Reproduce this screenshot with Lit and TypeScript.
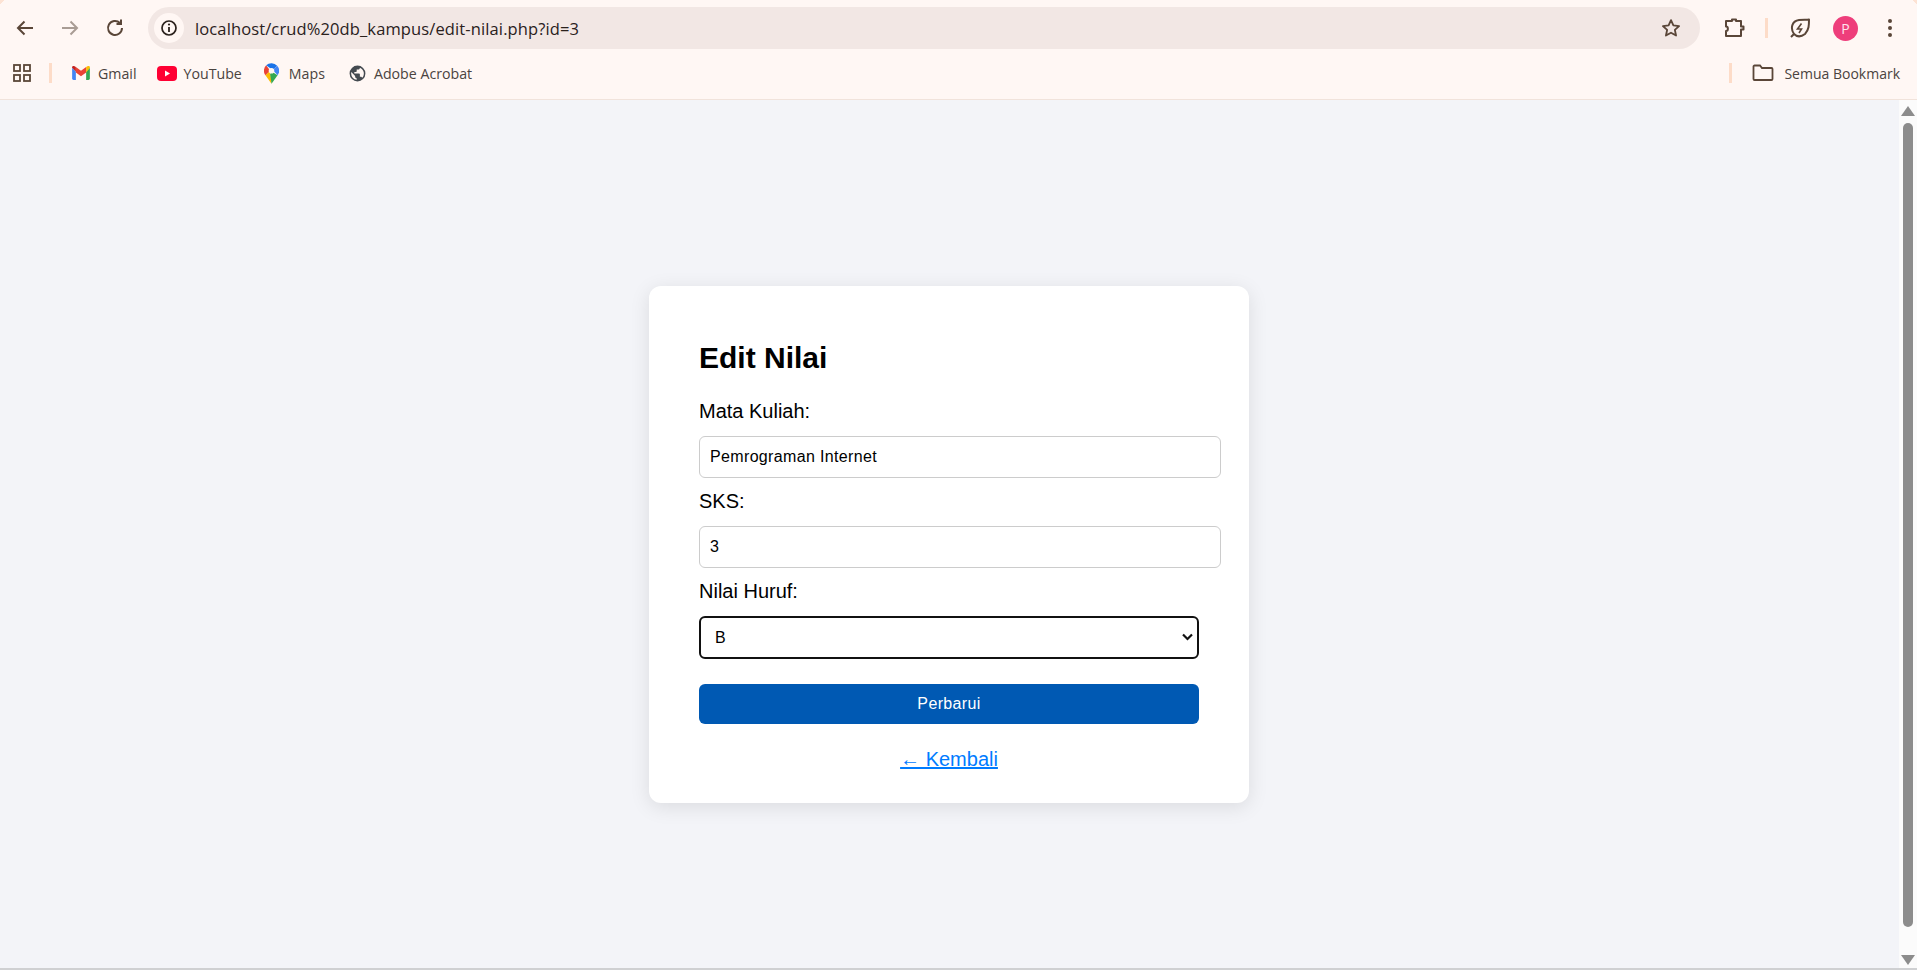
import { LitElement, html, css, svg } from "lit";
import { customElement } from "lit/decorators.js";

const stroke = "#5a4638";

@customElement("app-root")
export class AppRoot extends LitElement {
  static styles = css`
    :host { display: flex; flex-direction: column; width: 1917px; height: 970px; overflow: hidden; font-family: "Liberation Sans", Arial, sans-serif; background: #f3f4f8; }
    .chrome { flex: none; height: 100px; box-sizing: border-box; background: linear-gradient(135deg, #fde3d4 3px, transparent 3px), linear-gradient(225deg, #fde3d4 3px, transparent 3px), #fff7f4; border-bottom: 1px solid #f1e3db; display: flex; flex-direction: column; }
    .toolbar { height: 56px; flex: none; display: flex; align-items: center; box-sizing: border-box; padding-left: 13px; }
    .nav { width: 24px; height: 24px; flex: none; display: block; margin-right: 21px; }
    .omnibox { width: 1552px; height: 42px; flex: none; border-radius: 21px; background: #f2e7e4; display: flex; align-items: center; box-sizing: border-box; padding: 0 18px 0 6px; }
    .info { width: 30px; height: 30px; border-radius: 50%; background: #fff7f4; display: flex; align-items: center; justify-content: center; flex: none; }
    .url { margin-left: 11px; flex: 1; font: 16.5px "Open Sans", sans-serif; letter-spacing: .12px; color: #2a211c; white-space: nowrap; }
    .tool-right { display: flex; align-items: center; }
    .sep { width: 3px; height: 20px; background: #fddcc8; flex: none; }
    .avatar { width: 25px; height: 25px; border-radius: 50%; background: #ee3e7b; color: #ffe3ec; font: 14px "Open Sans", sans-serif; display: flex; align-items: center; justify-content: center; }
    .bookmarks { height: 34px; flex: none; display: flex; align-items: center; padding-left: 12px; font: 14.2px "Open Sans", sans-serif; color: #4a4340; }
    .bm { display: flex; align-items: center; gap: 7px; white-space: nowrap; }
    .spacer { flex: 1; }
    main { flex: 1; display: flex; min-height: 0; }
    .page { flex: 1; display: flex; justify-content: center; padding: 186px 1px 0 0; box-sizing: border-box; }
    .card { width: 600px; height: 517px; box-sizing: border-box; background: #fff; border-radius: 12px; box-shadow: 0 4px 20px rgba(0,0,0,.1); padding: 55px 50px 0; color: #000; }
    h2 { margin: 0 0 25px; font-size: 30px; line-height: 34px; font-weight: 700; }
    label { display: block; font-size: 20px; line-height: 23px; margin-bottom: 13px; }
    input, select, button { font-family: "Liberation Sans", Arial, sans-serif; font-size: 16px; letter-spacing: .35px; }
    input { display: block; width: 500px; box-sizing: content-box; height: 20px; padding: 10px; border: 1px solid #ccc; border-radius: 6px; margin-bottom: 12px; outline: none; background: #fff; color: #000; }
    .select-wrap { position: relative; width: 500px; height: 43px; margin-bottom: 25px; }
    select { appearance: none; display: block; width: 500px; height: 43px; box-sizing: border-box; padding: 0 14px; border: 2px solid #111; border-radius: 6px; background: #fff; color: #000; outline: none; }
    .chev { position: absolute; left: 483px; top: 17px; display: block; pointer-events: none; }
    button { display: block; width: 500px; height: 40px; border: 0; border-radius: 6px; background: #0059b3; color: #fff; padding: 0; }
    .back { display: block; text-align: center; margin-top: 24px; font-size: 20px; line-height: 23px; color: #007bff; text-decoration: underline; text-decoration-thickness: 2px; }
    .scroll { width: 18px; flex: none; background: #fbfbfb; display: flex; flex-direction: column; align-items: center; }
    .scroll svg { display: block; flex: none; }
    .up { margin-top: 6px; }
    .thumb { width: 10px; height: 804px; flex: none; background: #8c8c8c; border-radius: 5px; margin: 7px 0 28px; }
    .foot { height: 2px; flex: none; background: #cfd0d2; }
  `;

  private ic(body: unknown) {
    return html`<svg class="nav" width="24" height="24" viewBox="0 0 24 24" fill="none">${body}</svg>`;
  }

  render() {
    return html`
      <div class="chrome">
        <div class="toolbar">
          ${this.ic(svg`<path d="M20 12H5M11.5 5.5 5 12l6.500 6.500" stroke=${stroke} stroke-width="2"/>`)}
          ${this.ic(svg`<path d="M4 12h15M12.500 5.500 19 12l-6.500 6.500" stroke="#a99c94" stroke-width="2"/>`)}
          ${this.ic(svg`<path d="M19 12a7 7 0 1 1-2.100-5M18 3.500V8h-4.500" stroke=${stroke} stroke-width="2"/>`)}
          <div class="omnibox">
            <div class="info"><svg width="18" height="18" viewBox="0 0 18 18" fill="none"><circle cx="9" cy="9" r="7" stroke="#2a211c" stroke-width="1.700"/><path d="M9 8v5" stroke="#2a211c" stroke-width="1.800"/><circle cx="9" cy="5.500" r="1.100" fill="#2a211c"/></svg></div>
            <div class="url">localhost/crud%20db_kampus/edit-nilai.php?id=3</div>
            <svg width="22" height="22" viewBox="0 0 24 24" fill="none"><path d="M12 3.500l2.600 5.700 6.200.7-4.600 4.200 1.300 6.100L12 17.100l-5.500 3.100 1.300-6.100-4.600-4.200 6.200-.7z" stroke=${stroke} stroke-width="2" stroke-linejoin="round"/></svg>
          </div>
          <div class="tool-right">
            <svg style="margin-left:22px" width="24" height="24" viewBox="0 0 24 24" fill="none"><path d="M4 5h6V3.500h4V5h5v5.500h2.500v3H19V20H4v-5c2.500 0 2.500-4.500 0-4.500z" stroke=${stroke} stroke-width="2" stroke-linejoin="round"/></svg>
            <div class="sep" style="margin-left:19px"></div>
            <svg style="margin-left:20px" width="24" height="24" viewBox="0 0 24 24" fill="none"><path d="M6 18C2 12 4 5 11 4c4-.5 8 0 10-.5 0 5.500 0 10.500-4 14.500-4 3-8 3-11 0zM6 18l-3 3" stroke=${stroke} stroke-width="2" stroke-linejoin="round"/><path d="M13.500 7.500 9.500 13h4L11 17" stroke=${stroke} stroke-width="1.600"/></svg>
            <div class="avatar" style="margin-left:21px">P</div>
            <svg style="margin-left:29px" width="6" height="20" viewBox="0 0 6 20"><circle cx="3" cy="3" r="2" fill=${stroke}/><circle cx="3" cy="10" r="2" fill=${stroke}/><circle cx="3" cy="17" r="2" fill=${stroke}/></svg>
          </div>
        </div>
        <div class="bookmarks">
          <svg width="20" height="20" viewBox="0 0 20 20" fill="none" stroke=${stroke} stroke-width="1.800"><rect x="2" y="2" width="6" height="6"/><rect x="12" y="2" width="6" height="6"/><rect x="2" y="12" width="6" height="6"/><rect x="12" y="12" width="6" height="6"/></svg>
          <div class="sep" style="margin:0 20px 0 17px"></div>
          <div class="bm" style="gap:8px">
            <svg width="18" height="14" viewBox="0 0 19 15"><path d="M0 2v11.500A1.500 1.500 0 0 0 1.500 15H4V6z" fill="#4285f4"/><path d="M15 6v9h2.500a1.500 1.500 0 0 0 1.500-1.500V2z" fill="#34a853"/><path d="M4 1v6l5.500 4L15 7V1L9.500 5z" fill="#ea4335"/><path d="M0 2l4 4V1L2.500.200A1.600 1.600 0 0 0 0 2z" fill="#c5221f"/><path d="M15 1v6l4-5a1.600 1.600 0 0 0-2.500-1.800z" fill="#fbbc04"/></svg>
            <span>Gmail</span>
          </div>
          <div class="bm" style="margin-left:20px">
            <svg width="20" height="15" viewBox="0 0 20 15"><rect width="20" height="15" rx="4" fill="#ff0033"/><path d="M8 4.500v6l5-3z" fill="#fff"/></svg>
            <span>YouTube</span>
          </div>
          <div class="bm" style="margin-left:22px;gap:10px">
            <svg width="15" height="21" viewBox="0 0 16 22"><path d="M8 22 1.500 12.800 6.500 7.800z" fill="#fbbc04"/><path d="M8 22l6.500-9.200L8.500 9 6.500 11.500z" fill="#34a853"/><path d="M2.300 2.300A8 8 0 0 0 1.500 12.800l5-5z" fill="#ea4335"/><path d="M2.300 2.300A8 8 0 0 1 14 2.700L9.500 7.500z" fill="#1a73e8"/><path d="M14 2.700a8 8 0 0 1 .5 10.100L9.500 7.500z" fill="#4285f4"/><circle cx="8" cy="8" r="3" fill="#fff7f4"/></svg>
            <span>Maps</span>
          </div>
          <div class="bm" style="margin-left:23px">
            <svg width="19" height="19" viewBox="0 0 24 24"><path fill="#444a50" d="M12 2a10 10 0 1 0 0 20 10 10 0 0 0 0-20zM4 12c0-.6.100-1.200.200-1.800L9 15v1c0 1.100.900 2 2 2v2a8 8 0 0 1-7-8zm13.900 5.400c-.3-.8-1-1.400-1.900-1.400h-1v-3c0-.6-.4-1-1-1H8v-2h2c.6 0 1-.4 1-1V7h2c1.100 0 2-.9 2-2v-.4a8 8 0 0 1 2.900 12.800z"/></svg>
            <span>Adobe Acrobat</span>
          </div>
          <div class="spacer"></div>
          <div class="sep" style="margin-right:20px"></div>
          <div class="bm" style="margin-right:17px;gap:10px">
            <svg width="22" height="18" viewBox="0 0 22 18" fill="none"><path d="M1.500 15V2.500a1 1 0 0 1 1-1h5.500l2 2.500h9.500a1 1 0 0 1 1 1V15a1 1 0 0 1-1 1h-17a1 1 0 0 1-1-1z" stroke=${stroke} stroke-width="1.800"/></svg>
            <span style="font-size:14px">Semua Bookmark</span>
          </div>
        </div>
      </div>
      <main>
        <div class="page">
          <div class="card">
            <h2>Edit Nilai</h2>
            <label>Mata Kuliah:</label>
            <input type="text" .value=${"Pemrograman Internet"} />
            <label>SKS:</label>
            <input type="text" .value=${"3"} />
            <label>Nilai Huruf:</label>
            <div class="select-wrap">
              <select><option>B</option></select>
              <svg class="chev" width="11" height="8" viewBox="0 0 11 8" fill="none"><path d="M1 1.500 5.500 6 10 1.500" stroke="#111" stroke-width="2.200"/></svg>
            </div>
            <button>Perbarui</button>
            <a class="back">← Kembali</a>
          </div>
        </div>
        <div class="scroll">
          <svg class="up" width="14" height="10" viewBox="0 0 14 10"><path d="M7 0l7 10H0z" fill="#8c8c8c"/></svg>
          <div class="thumb"></div>
          <svg width="14" height="10" viewBox="0 0 14 10"><path d="M0 0h14L7 10z" fill="#8c8c8c"/></svg>
        </div>
      </main>
      <div class="foot"></div>
    `;
  }
}
